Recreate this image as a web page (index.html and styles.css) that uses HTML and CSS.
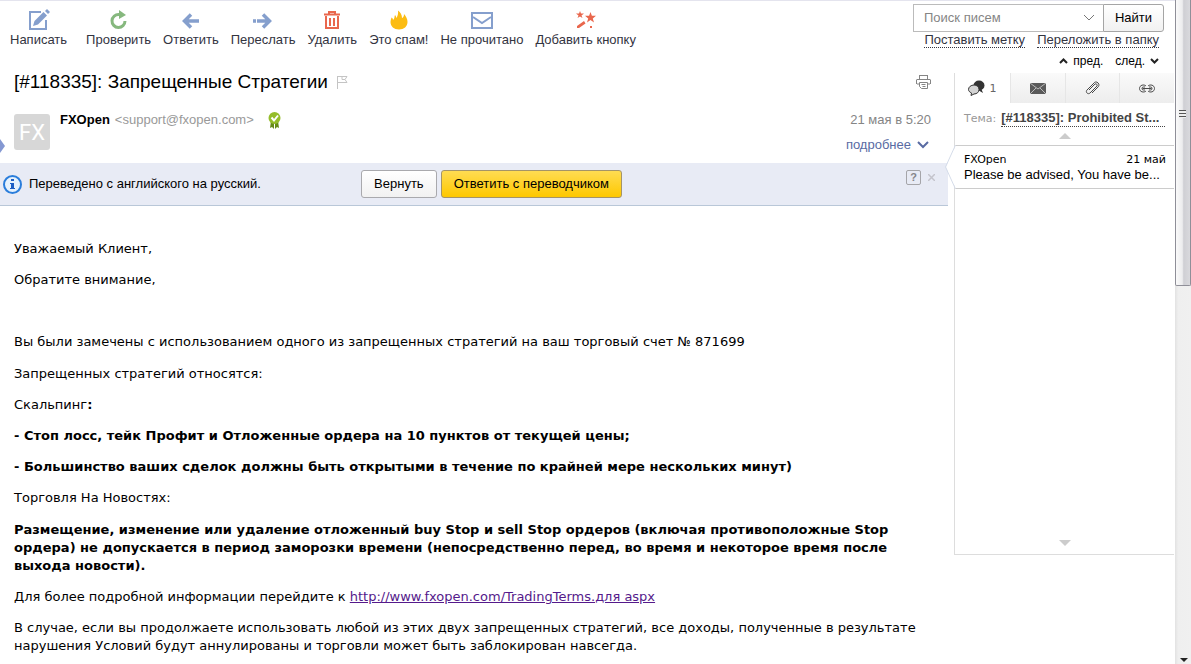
FILE: index.html
```html
<!DOCTYPE html>
<html lang="ru">
<head>
<meta charset="utf-8">
<title>[#118335]: Запрещенные Стратегии</title>
<link rel="stylesheet" href="styles.css">
</head>
<body>
<div class="app">
  <div class="page">
    <header class="header">
      <nav class="toolbar">
        <button class="tool tool-compose"><svg width="22" height="22" viewBox="0 0 22 22"><path d="M13 3H2V20H18V11" fill="none" stroke="#859fcd" stroke-width="2"/><path d="M5 17l1.500-5L15.500 3l3.500 3.500-9 9z" fill="#859fcd"/><path d="M17 2l2-2 3 3-2 2z" fill="#859fcd"/></svg>Написать</button>
        <button class="tool"><svg width="20" height="22" viewBox="0 0 20 22"><path d="M12 5.500H10A6.500 6.500 0 1 0 16 12" fill="none" stroke="#86b87e" stroke-width="3"/><path d="M10 1l7 5-7 4z" fill="#86b87e"/></svg>Проверить</button>
        <button class="tool"><svg width="20" height="22" viewBox="0 0 20 22"><path d="M18 12H4M10 5.500L3.500 12l6.500 6.500" fill="none" stroke="#859fcd" stroke-width="3.500"/></svg>Ответить</button>
        <button class="tool"><svg width="20" height="22" viewBox="0 0 20 22"><path d="M0 12h3M4 12h13M10 5.500l6.500 6.500-6.500 6.500" fill="none" stroke="#859fcd" stroke-width="3.500"/></svg>Переслать</button>
        <button class="tool"><svg width="20" height="22" viewBox="0 0 20 22"><path d="M2 5.500h16M7 5V3h6v2M4 7v12h12V7M8 9v8M12 9v8" fill="none" stroke="#e9674d" stroke-width="2"/></svg>Удалить</button>
        <button class="tool"><svg width="20" height="22" viewBox="0 0 20 22"><path d="M9 1.500c2.500 2 4 4 4 7.500 1.500-.500 2-2 2-4 2 2.500 3.500 4.500 3.500 8 0 4.500-3.500 7.500-8.500 7.500s-8.500-3-8.500-7.500c0-1.500.500-3 1-4.500 1 .500 1.500 1.500 1.500 2.500C6 9.500 5 8 6 6c1 1 1 2 1.500 3C8.500 7 9.500 5 9 1.500z" fill="#fcbc12"/></svg>Это спам!</button>
        <button class="tool"><svg width="22" height="22" viewBox="0 0 22 22"><path d="M1 4h20v15H1z" fill="none" stroke="#859fcd" stroke-width="2"/><path d="M2 8l9 6 9-6" fill="none" stroke="#859fcd" stroke-width="2"/></svg>Не прочитано</button>
        <button class="tool"><svg width="20" height="22" viewBox="0 0 20 22"><g fill="#e9674d"><path d="M4 2l1 2.500h3L5.500 6.500l1 2.500L4 7.500 1.500 9l1-2.500L0 4.500h3z"/><path d="M14.500 3l1.400 3.800H20l-3.200 2.600 1.200 4-3.500-2.300-3.500 2.300 1.200-4L9 6.800h4.100z"/><path d="M1 17l7-5 1.500 2.500L3 19H1zM14 17h2v2h-2z"/></g></svg>Добавить кнопку</button>
      </nav>
      <div class="header-side">
        <form class="search" onsubmit="return false">
          <label class="search-box"><input type="text" placeholder="Поиск писем" aria-label="Поиск писем"><svg width="12" height="8" viewBox="0 0 12 8"><path d="M1 1l5 5 5-5" fill="none" stroke="#777"/></svg></label>
          <button class="search-button">Найти</button>
        </form>
        <div class="actions"><a href="#label">Поставить метку</a><a href="#move">Переложить в папку</a></div>
        <div class="pager"><a href="#prev"><svg width="9" height="6" viewBox="0 0 9 6"><path d="M1 5l3.500-3.500L8 5" fill="none" stroke="#222" stroke-width="2"/></svg>пред.</a><a href="#next">след.<svg width="9" height="6" viewBox="0 0 9 6"><path d="M1 1l3.500 3.500L8 1" fill="none" stroke="#222" stroke-width="2"/></svg></a></div>
      </div>
    </header>
    <div class="content">
      <main class="mail">
        <div class="subject-row">
          <h1 class="subject">[#118335]: Запрещенные Стратегии</h1>
          <svg width="12" height="14" viewBox="0 0 12 14"><path d="M1.500 1v13M2 1.500h9L9 4.500l2 3H2M6 1.500v3h3" fill="none" stroke="#c4c4c4"/></svg>
          <button class="icon-button print" aria-label="Печать"><svg width="15" height="14" viewBox="0 0 15 14"><path d="M3 .500h9M1 4.500h13M.500 9V4.500M14.500 9V4.500M1 9h2.500M11.500 9H14M3.500 7.500h8v6h-6l-2-2zM5.500 9.500h4M6.500 11.500h3M3.500 1v3M11.500 1v3" fill="none" stroke="#858585"/></svg></button>
        </div>
        <div class="sender">
          <div class="avatar">FX</div>
          <div class="sender-main"><b>FXOpen</b><span class="email">&lt;support@fxopen.com&gt;</span><svg class="seal" width="13" height="17" viewBox="0 0 13 17"><path d="M3 9L2 16l2-1 2 2V10zM10 9l1 7-2-1-2 2V10z" fill="#668b18"/><circle cx="6.500" cy="6" r="6" fill="#95bd2b"/><path d="M3.500 5.500l2.500 3 4-5" fill="none" stroke="#fff" stroke-width="2"/></svg></div>
          <div class="sender-side"><span>21 мая в 5:20</span><a href="#details">подробнее<svg width="12" height="8" viewBox="0 0 12 8"><path d="M1 1l5 5 5-5" fill="none" stroke="#596ba3" stroke-width="2"/></svg></a></div>
        </div>
        <div class="translate">
          <svg width="19" height="19" viewBox="0 0 19 19"><circle cx="9.500" cy="9.500" r="8.500" fill="#e6f2fd" stroke="#2a7ddb" stroke-width="2"/><path d="M8 4h3v2H8zM7 8h4v5h1v1H7v-1h1V9H7z" fill="#1e5fc4"/></svg>
          <span class="translate-text">Переведено с английского на русский.</span>
          <button class="button">Вернуть</button>
          <button class="button button-primary">Ответить с переводчиком</button>
          <div class="translate-tools"><button class="help">?</button><button class="icon-button" aria-label="Закрыть"><svg width="7" height="7" viewBox="0 0 7 7"><path d="M0 0l7 7M7 0L0 7" stroke="#c4c4cc" stroke-width="1.500"/></svg></button></div>
        </div>
        <article class="letter">
          <section>
            <p>Уважаемый Клиент,</p>
            <p>Обратите внимание,</p>
            <p>&nbsp;</p>
            <p>Вы были замечены с использованием одного из запрещенных стратегий на ваш торговый счет № 871699</p>
          </section>
          <section>
            <p>Запрещенных стратегий относятся:</p>
            <p>Скальпинг<b>:</b></p>
            <p><b>- Стоп лосс, тейк Профит и Отложенные ордера на 10 пунктов от текущей цены;</b></p>
            <p><b>- Большинство ваших сделок должны быть открытыми в течение по крайней мере нескольких минут)</b></p>
            <p>Торговля На Новостях:</p>
          </section>
          <section>
            <p><b>Размещение, изменение или удаление отложенный buy Stop и sell Stop ордеров (включая противоположные Stop ордера) не допускается в период заморозки времени (непосредственно перед, во время и некоторое время после выхода новости).</b></p>
            <p>Для более подробной информации перейдите к <a href="#terms">http://www.fxopen.com/TradingTerms.для aspx</a></p>
            <p>В случае, если вы продолжаете использовать любой из этих двух запрещенных стратегий, все доходы, полученные в результате нарушения Условий будут аннулированы и торговли может быть заблокирован навсегда.</p>
          </section>
        </article>
        <span class="marker"></span>
      </main>
      <aside class="thread">
        <div class="tabs">
          <button class="tab tab-active"><svg width="17" height="16" viewBox="0 0 17 16"><ellipse cx="11" cy="5.500" rx="5.500" ry="5" fill="#333"/><path d="M13 8l2 5-5-3z" fill="#333"/><path d="M6 5c3 0 5 2 5 4.500S9 14 6 14l-3 1.500.500-2.500C1.500 12 .500 11 .500 9.500.500 7 3 5 6 5z" fill="#d3d3d3" stroke="#333"/></svg>1</button>
          <button class="tab" aria-label="Письма"><svg width="16" height="11" viewBox="0 0 16 11"><path d="M0 0h16v11H0z" fill="#5a5a5a"/><path d="M0 0l8 6 8-6M0 11l6-6M16 11l-6-6" fill="none" stroke="#bbb"/></svg></button>
          <button class="tab" aria-label="Вложения"><svg width="15" height="15" viewBox="0 0 15 15"><path d="M4 9l6-6c1-1 3 1 2 2l-7 7c-2 2-5-1-3-3l7-7c2-3 7 1 4 4l-6 6" fill="none" stroke="#4a4a4a"/></svg></button>
          <button class="tab" aria-label="Ссылки"><svg width="16" height="9" viewBox="0 0 16 9"><path d="M7 2C5 0 .500 1 .500 4.500S5 9 7 7M9 2c2-2 6.500-1 6.500 2.500S11 9 9 7M3.500 4.500h9M6 3H4.500a1.500 1.500 0 0 0 0 3H6M10 3h1.500a1.500 1.500 0 0 1 0 3H10" fill="none" stroke="#4a4a4a"/></svg></button>
        </div>
        <div class="topic"><span>Тема:</span><a href="#topic">[#118335]: Prohibited St...</a></div>
        <div class="arrow arrow-up"></div>
        <div class="card">
          <svg class="notch" width="11" height="44" viewBox="0 0 11 44"><path d="M11 0L1 22l10 22z" fill="#fff"/><path d="M10.500 0L.500 22l10 22" fill="none" stroke="#d5dcea"/></svg>
          <div class="card-head"><span>FXOpen</span><time>21 май</time></div>
          <div class="card-text">Please be advised, You have be...</div>
        </div>
        <div class="thread-space"></div>
        <div class="arrow arrow-down"></div>
      </aside>
    </div>
  </div>
  <div class="scrollbar"><div class="thumb"><span class="grip"></span></div><span class="scroll-down"></span></div>
</div>
</body>
</html>
```
FILE: styles.css
```css
* { box-sizing: border-box; }
body { margin: 0; background: #fff; color: #000; font: 13px/16px "Liberation Sans", Arial, sans-serif; }
button { margin: 0; padding: 0; border: 0; background: none; color: inherit; font: inherit; cursor: pointer; }
svg { flex: none; display: block; }
.app { display: flex; height: 100vh; overflow: hidden; }
.page { flex: 1; min-width: 0; display: flex; flex-direction: column; }

.header { display: flex; justify-content: space-between; padding: 3px 11px 4px 10px; border-top: 1px solid #e4e4ee; }
.toolbar { display: flex; align-items: flex-start; gap: 12px; padding-top: 5px; color: #33343f; }
.tool { display: flex; flex-direction: column; align-items: center; gap: 1px; white-space: nowrap; }
.tool-compose { margin-right: 7px; }
.header-side { display: flex; flex-direction: column; align-items: flex-end; }
.search { display: flex; height: 28px; }
.search-box { display: flex; align-items: center; width: 190px; padding: 0 8px 0 10px; border: 1px solid #bbb; border-right: 0; }
.search-box input { flex: 1; min-width: 0; padding: 0; border: 0; outline: 0; background: none; font: inherit; }
.search-box input::placeholder { color: #858585; opacity: 1; }
.search-button { width: 61px; border: 1px solid #a5a5a5; border-radius: 0 3px 3px 0; background: linear-gradient(#fff, #f1f1f1); }
.actions { display: flex; gap: 12px; padding-right: 5px; }
.actions a { color: #33343f; line-height: 15px; text-decoration: none; border-bottom: 1px dotted #33343f; }
.pager { display: flex; gap: 12px; padding: 5px 5px 0 0; font-size: 12px; }
.pager a { display: flex; align-items: center; gap: 5px; color: #000; text-decoration: none; }

.content { flex: 1; min-height: 0; display: flex; align-items: flex-start; gap: 6px; }
.mail { position: relative; flex: 1; min-width: 0; }
.subject-row { display: flex; align-items: center; gap: 8px; height: 18px; padding: 0 17px 0 14px; }
.subject { margin: 0; font-size: 19px; line-height: 18px; font-weight: normal; }
.print { margin-left: auto; }
.sender { display: flex; align-items: flex-start; padding: 21px 17px 13px 14px; gap: 10px; }
.avatar { width: 36px; height: 36px; margin-top: 2px; border-radius: 3px; background: #d7d7d7; color: #fff; font: 22px/37px Roboto, sans-serif; text-align: center; }
.sender-main { display: flex; gap: 5px; }
.email { color: #999; }
.seal { margin-left: 9px; }
.sender-side { height: 36px; margin-left: auto; display: flex; flex-direction: column; align-items: flex-end; gap: 9px; color: #858585; }
.sender-side a { display: flex; align-items: center; gap: 6px; padding-right: 2px; color: #596ba3; text-decoration: none; }

.translate { display: flex; align-items: center; height: 43px; padding: 0 13px 0 3px; border-bottom: 1px solid #b9c7d8; background: #e8ebf5; }
.translate-text { margin: 0 auto 0 7px; }
.translate .button { height: 28px; padding: 0 12px; border: 1px solid #a9a9ad; border-radius: 3px; background: linear-gradient(#fff, #f1f1f1); }
.translate .button-primary { margin-left: 4px; border-color: #a49468; background: linear-gradient(#ffdc52, #fec800); }
.translate-tools { flex: 0 1 313px; display: flex; align-items: center; justify-content: flex-end; gap: 7px; height: 28px; padding-bottom: 14px; }
.help { width: 15px; height: 15px; border: 1px solid #a5a5a9; border-radius: 2px; color: #85858a; font-weight: bold; font-size: 11px; line-height: 13px; }

.letter { padding: 34px 20px 0 14px; font: 13px/18px "DejaVu Sans", Verdana, sans-serif; }
.letter section { margin-bottom: 14px; }
.letter p { margin: 0 0 13px; }
.letter p:last-child { margin-bottom: 0; }
.letter a { color: #551a8b; }
.marker { position: absolute; left: 0; top: 66px; border: solid transparent; border-width: 7px 0 7px 5px; border-left-color: #8498d2; }

.thread { flex: 0 0 220px; height: 482px; display: flex; flex-direction: column; margin-right: 1px; border-left: 1px solid #ddd; border-bottom: 1px solid #ddd; }
.tabs { display: grid; grid-template-columns: repeat(4, 1fr); height: 30px; }
.tab { display: flex; align-items: center; justify-content: center; gap: 4px; border-left: 1px solid #e6e6e6; background: linear-gradient(#fafafa, #ededed); }
.tab-active { border-left: 0; background: #fff; color: #666; font: 11px "DejaVu Sans", sans-serif; }
.topic { display: flex; align-items: center; gap: 5px; padding: 7px 9px 6px; white-space: nowrap; }
.topic span { color: #999; font: 11px/16px "DejaVu Sans", sans-serif; }
.topic a { flex: 1; min-width: 0; color: #444; font-weight: bold; text-decoration: none; border-bottom: 1px dotted #444; }
.arrow { align-self: center; border: solid transparent; border-width: 0 6px; }
.arrow-up { margin-bottom: 6px; border-bottom: 6px solid #ccc; }
.arrow-down { margin-bottom: 8px; border-top: 6px solid #ccc; }
.card { position: relative; padding: 6px 8px 5px 9px; border: solid #ccc; border-width: 1px 0; }
.notch { position: absolute; left: -10px; top: -1px; }
.card-head { display: flex; justify-content: space-between; font: 11px/15px "DejaVu Sans", sans-serif; }
.card-text { white-space: nowrap; }
.thread-space { flex: 1; }

.scrollbar { position: relative; flex: 0 0 16px; background: linear-gradient(90deg, #e2e2e2, #efefef 20%, #f0f0f0); }
.thumb { height: 43%; padding: 110px 4px 0 3px; border: 1px solid #8f8f98; border-top: 0; border-radius: 0 0 2px 2px; background: linear-gradient(90deg, #fafafa, #ececee 45%, #cfcfd4 55%, #d9d9dd); }
.grip { display: block; height: 8px; background: repeating-linear-gradient(#555 0 1px, #eee 1px 3px); }
.scroll-down { position: absolute; left: 5px; bottom: 2px; border: solid transparent; border-width: 4px 4px 0; border-top-color: #222; }
```
